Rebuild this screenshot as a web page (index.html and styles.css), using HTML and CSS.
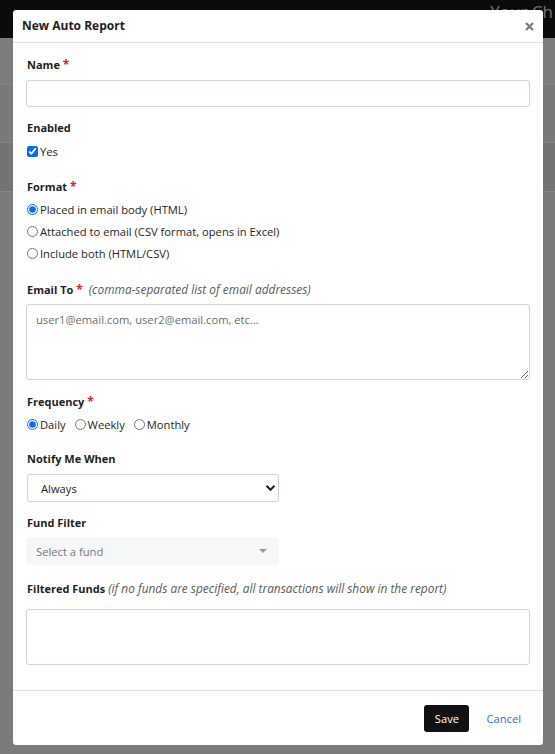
FILE: index.html
```html
<!DOCTYPE html>
<html>
<head>
<meta charset="utf-8">
<link rel="stylesheet" href="styles.css">
</head>
<body>
<div class="page">
  <div class="navbar"><span class="brand">Your Ch</span></div>
  <div class="band band-a"></div>
  <div class="band band-b"></div>
  <div class="band band-c"></div>
</div>

<div class="modal">
  <div class="modal-header">
    <div class="modal-title">New Auto Report</div>
    <svg class="close" width="9" height="9" viewBox="0 0 9 9"><path d="M1 1 L8 8 M8 1 L1 8" stroke="#7a7a7a" stroke-width="2.2" stroke-linecap="butt"/></svg>
  </div>
  <div class="modal-body">
    <div class="group g-name">
      <div class="label lb-7">Name <span class="req">*</span></div>
      <input class="input" type="text">
    </div>

    <div class="group g-enabled">
      <div class="label lb-6">Enabled</div>
      <label class="check-row"><input type="checkbox" class="cb" checked> Yes</label>
    </div>

    <div class="group g-format">
      <div class="label lb-3">Format <span class="req">*</span></div>
      <label class="radio-row"><input type="radio" name="fmt" class="rd" checked> Placed in email body (HTML)</label>
      <label class="radio-row"><input type="radio" name="fmt" class="rd"> Attached to email (CSV format, opens in Excel)</label>
      <label class="radio-row"><input type="radio" name="fmt" class="rd"> Include both (HTML/CSV)</label>
    </div>

    <div class="group g-email">
      <div class="label lb-6">Email To <span class="req">*</span> <span class="hint">&nbsp;(comma-separated list of email addresses)</span></div>
      <textarea class="textarea" placeholder="user1@email.com, user2@email.com, etc..."></textarea>
    </div>

    <div class="group g-freq">
      <div class="label lb-3">Frequency <span class="req">*</span></div>
      <div class="inline-radios">
        <label class="radio-inline"><input type="radio" name="freq" class="rd" checked> Daily</label>
        <label class="radio-inline"><input type="radio" name="freq" class="rd"> Weekly</label>
        <label class="radio-inline"><input type="radio" name="freq" class="rd"> Monthly</label>
      </div>
    </div>

    <div class="group g-notify">
      <div class="label lb-7">Notify Me When</div>
      <div class="select">
        <span>Always</span>
        <svg class="chev" width="11" height="8" viewBox="0 0 11 8"><path d="M1.5 1.8 L5.5 5.8 L9.5 1.8" fill="none" stroke="#222" stroke-width="2"/></svg>
      </div>
    </div>

    <div class="group g-fund">
      <div class="label lb-6">Fund Filter</div>
      <div class="select2">
        <span>Select a fund</span>
        <span class="caret"></span>
      </div>
    </div>

    <div class="group g-filtered">
      <div class="label lb-12">Filtered Funds <span class="hint">(if no funds are specified, all transactions will show in the report)</span></div>
      <div class="box"></div>
    </div>
  </div>
  <div class="modal-footer">
    <button class="btn-save">Save</button>
    <a class="btn-cancel">Cancel</a>
  </div>
</div>
</body>
</html>
```

FILE: styles.css
```css
* { box-sizing: border-box; }
html, body { margin: 0; padding: 0; }
body {
  width: 555px;
  height: 754px;
  overflow: hidden;
  font-family: "Open Sans", "Liberation Sans", sans-serif;
  color: #212529;
  background: #7b7b7b;
  position: relative;
}
.page { display: flex; flex-direction: column; }
.navbar {
  height: 38px;
  background: #0b0b0b;
  display: flex;
  justify-content: flex-end;
  align-items: flex-start;
  overflow: hidden;
}
.brand {
  color: #747474;
  font-size: 17px;
  line-height: 14px;
  margin-top: 5px;
  margin-right: 2px;
  white-space: nowrap;
}
.band { border-bottom: 1px solid #858585; }
.band-a { height: 47px; background: #7c7c7c; }
.band-b { height: 58px; background: #797979; }
.band-c { height: 49px; background: #727471; }

.modal {
  position: absolute;
  left: 13px;
  top: 10px;
  width: 530px;
  height: 735px;
  background: #fff;
  border-radius: 3px;
  display: flex;
  flex-direction: column;
}
.modal-header {
  height: 33px;
  border-bottom: 1px solid #dee2e6;
  display: flex;
  align-items: center;
  justify-content: space-between;
  padding: 0 9px 0 9px;
}
.modal-title {
  font-weight: 700;
  font-size: 12px;
  color: #1e1e1e;
  margin-top: -1px;
}
.close {
  display: block;
  margin-top: 1px;
}
.modal-body {
  flex: 1;
  padding: 14px 13px 0 14px;
}
.label {
  font-size: 11px;
  font-weight: 700;
  line-height: 16px;
  height: 16px;
  white-space: nowrap;
  color: #1e1e1e;
}
.lb-3 { margin-bottom: 3px; }
.lb-6 { margin-bottom: 6px; }
.lb-7 { margin-bottom: 7px; }
.lb-12 { margin-bottom: 12px; }
.req { color: #e0201c; font-weight: 700; font-size: 12px; line-height: 10px; }
.hint { font-weight: 400; font-style: italic; color: #5a5a5a; font-size: 11.9px; line-height: 10px; }

.g-name { margin-bottom: 13px; }
.g-enabled { margin-bottom: 19px; }
.g-format { margin-bottom: 18px; }
.g-email { margin-bottom: 14px; }
.g-freq { margin-bottom: 16px; }
.g-notify { margin-bottom: 13px; }
.g-fund { margin-bottom: 16px; }

.input {
  display: block;
  width: 504px;
  height: 27px;
  border: 1px solid #ced4da;
  border-radius: 3px;
  margin: 0;
  margin-left: -1px;
}
.check-row, .radio-row, .radio-inline {
  display: flex;
  align-items: center;
  font-size: 11.2px;
  color: #1e1e1e;
}
.check-row { height: 18px; }
.radio-row { height: 22px; }
.inline-radios { display: flex; height: 22px; align-items: center; gap: 9px; }
.cb, .rd {
  width: 11px;
  height: 11px;
  margin: 0 2px 0 0;
  accent-color: #0a6ee6;
}
.textarea {
  display: block;
  width: 504px;
  height: 76px;
  margin: 0 0 0 -1px;
  border: 1px solid #ced4da;
  border-radius: 3px;
  padding: 7px 9px;
  font-family: "Open Sans", "Liberation Sans", sans-serif;
  font-size: 11.2px;
  resize: vertical;
}
.textarea::placeholder { color: #6c6c6c; }
.select {
  width: 252px;
  height: 28px;
  border: 1px solid #ced4da;
  border-radius: 3px;
  display: flex;
  align-items: center;
  justify-content: space-between;
  padding: 0 2px 0 13px;
  font-size: 11.2px;
  color: #222;
}
.select2 {
  width: 253px;
  height: 28px;
  margin-left: -1px;
  background: #f6f7f8;
  border-radius: 3px;
  display: flex;
  align-items: center;
  justify-content: space-between;
  padding: 0 12px 0 10px;
  font-size: 11.2px;
  color: #777;
}
.caret {
  width: 0; height: 0;
  border-left: 4px solid transparent;
  border-right: 4px solid transparent;
  border-top: 4px solid #999;
}
.box {
  width: 504px;
  height: 56px;
  margin-left: -1px;
  border: 1px solid #ced4da;
  border-radius: 3px;
}
.modal-footer {
  height: 55px;
  border-top: 1px solid #dee2e6;
  display: flex;
  align-items: center;
  justify-content: flex-end;
  padding: 0 22px 0 0;
  gap: 17px;
}
.btn-save {
  width: 45px;
  height: 27px;
  background: #111;
  color: #fff;
  border: none;
  border-radius: 3px;
  font-family: "Open Sans", "Liberation Sans", sans-serif;
  font-size: 11.2px;
  padding: 0;
}
.btn-cancel {
  color: #1a73e8;
  font-size: 11.2px;
}
```
